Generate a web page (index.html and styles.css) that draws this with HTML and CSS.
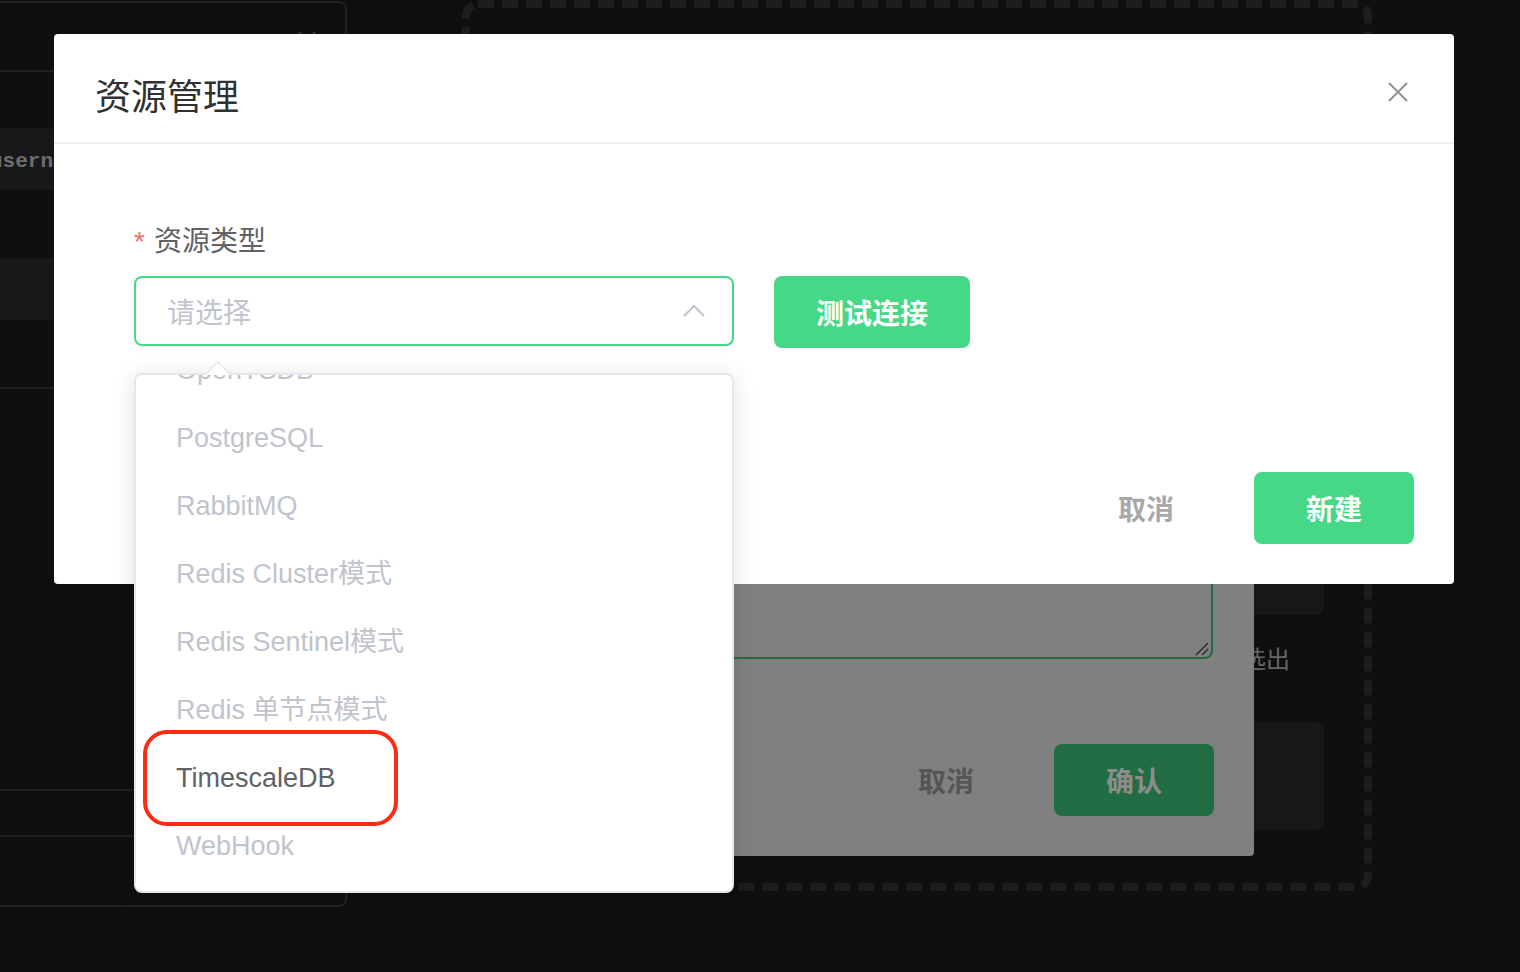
FILE: index.html
```html
<!DOCTYPE html>
<html lang="zh-CN">
  <head>
    <meta charset="UTF-8" />
    <meta name="viewport" content="width=device-width, initial-scale=1.0" />
    <title>资源管理</title>
    <link rel="stylesheet" href="styles.css">
  </head>
  <body>
    <!-- page behind the dialogs -->
    <div class="page">
      <aside class="fields">
        <div class="fields-head">
          <svg class="head-close" width="20" height="20" viewBox="0 0 20 20">
            <path d="M2 2 L18 18 M18 2 L2 18" stroke="#3a3a3d" stroke-width="2" fill="none" />
          </svg>
        </div>
        <div class="field-row active"><span class="field-name">username</span></div>
        <div class="field-row active second"></div>
        <div class="field-line first"></div>
        <div class="field-line second"></div>
        <div class="field-line third"></div>
      </aside>

      <section class="canvas">
        <svg class="dash-frame" width="910" height="891" viewBox="0 0 910 891">
          <rect x="4" y="4" width="902" height="883" rx="12" ry="12"
            fill="none" stroke="#1d1d20" stroke-width="8" stroke-dasharray="16 8" />
        </svg>
        <div class="side-col">
          <div class="side-card tall"></div>
          <div class="side-label">选出</div>
          <div class="side-card low"></div>
        </div>
      </section>
    </div>

    <div class="dialog dialog-back">
      <div class="back-body">
        <div class="back-textarea">
          <svg class="resize" width="16" height="16" viewBox="0 0 16 16">
            <path d="M15 3 L3 15 M15 9 L9 15" stroke="#2e2e2e" stroke-width="1.5" fill="none" />
          </svg>
        </div>
      </div>
      <div class="dialog-footer">
        <button class="btn-text dim">取消</button>
        <button class="btn-primary dim">确认</button>
      </div>
    </div>

    <!-- resource dialog -->
    <div class="dialog dialog-main">
      <div class="dialog-header">
        <h2 class="dialog-title">资源管理</h2>
        <svg class="dialog-close" width="20" height="20" viewBox="0 0 20 20">
          <path d="M1 1 L19 19 M19 1 L1 19" stroke="#909399" stroke-width="2" fill="none" />
        </svg>
      </div>

      <div class="dialog-body">
        <div class="form-label"><span class="required">*</span>资源类型</div>
        <div class="form-row">
          <div class="select is-focus">
            <span class="placeholder">请选择</span>
            <svg class="select-arrow" width="22" height="13" viewBox="0 0 22 13">
              <path d="M1 12 L11 2 L21 12" stroke="#c0c4cc" stroke-width="2" fill="none" />
            </svg>
          </div>
          <button class="btn-primary">测试连接</button>
        </div>

        <div class="dropdown">
          <div class="dropdown-wrap">
            <ul class="options">
              <li>OpenTSDB</li>
              <li>PostgreSQL</li>
              <li>RabbitMQ</li>
              <li>Redis Cluster模式</li>
              <li>Redis Sentinel模式</li>
              <li>Redis 单节点模式</li>
              <li class="hover">TimescaleDB<span class="mark"></span></li>
              <li>WebHook</li>
            </ul>
          </div>
        </div>
      </div>

      <div class="dialog-footer">
        <button class="btn-text">取消</button>
        <button class="btn-primary">新建</button>
      </div>
    </div>
  </body>
</html>
```

FILE: styles.css
```css
* {
  box-sizing: border-box;
}

body {
  margin: 0;
  width: 1520px;
  height: 972px;
  overflow: hidden;
  position: relative;
  background-color: #0f0f0f;
  font-family: "Liberation Sans", "Noto Sans CJK SC", sans-serif;
}

button {
  font-family: "Liberation Sans", "Noto Sans CJK SC", sans-serif;
  border: none;
  cursor: pointer;
}

/* background page */
.page {
  display: flex;
  align-items: flex-start;
}

.fields {
  margin-left: -40px;
  margin-top: 1px;
  width: 387px;
  height: 906px;
  border: 2px solid #222225;
  border-radius: 8px;
  display: flex;
  flex-direction: column;
}

.fields-head {
  height: 69px;
  border-bottom: 2px solid #1f1f22;
  display: flex;
  justify-content: flex-end;
  padding: 27px 28px 0 0;
}

.field-row {
  height: 62px;
  margin-top: 56px;
  display: flex;
  align-items: center;
  padding-top: 4px;
}

.field-row.active {
  background-color: #18181b;
}

.field-row.second {
  margin-top: 68px;
}

.field-name {
  margin-left: 28px;
  font-family: "Liberation Mono", monospace;
  font-size: 21px;
  color: #6e6e6e;
  font-weight: bold;
}

.field-line {
  height: 2px;
  background-color: #1f1f22;
}

.field-line.first {
  margin-top: 67px;
}

.field-line.second {
  margin-top: 400px;
}

.field-line.third {
  margin-top: 44px;
}

.canvas {
  position: relative;
  margin-left: 115px;
  width: 910px;
  height: 891px;
  display: flex;
  flex-direction: column;
  align-items: flex-end;
  padding-right: 48px;
}

.dash-frame {
  position: absolute;
  left: 0;
  top: 0;
}

.side-col {
  display: flex;
  flex-direction: column;
  align-items: flex-end;
}

.side-card {
  width: 300px;
  background-color: #17171a;
  border-radius: 8px;
}

.side-card.tall {
  margin-top: 415px;
  height: 200px;
}

.side-card.low {
  margin-top: 50px;
  height: 108px;
}

.side-label {
  margin-top: 33px;
  margin-right: 34px;
  font-size: 24px;
  line-height: 24px;
  color: #666666;
}

/* dialogs */
.dialog {
  position: absolute;
  border-radius: 4px;
  display: flex;
  flex-direction: column;
}

.dialog-back {
  left: 254px;
  top: 400px;
  width: 1000px;
  height: 456px;
  background-color: #808080;
}

.back-body {
  padding: 40px 41px 0;
}

.back-textarea {
  position: relative;
  height: 219px;
  border: 2px solid #226c43;
  border-radius: 8px;
}

.resize {
  position: absolute;
  right: 2px;
  bottom: 1px;
}

.dialog-main {
  left: 54px;
  top: 34px;
  width: 1400px;
  height: 550px;
  background-color: #ffffff;
}

.dialog-header {
  height: 110px;
  border-bottom: 2px solid #efeff1;
  display: flex;
  justify-content: space-between;
  align-items: flex-start;
  padding: 40px 46px 0 41px;
}

.dialog-title {
  margin: 0;
  font-size: 36px;
  line-height: 48px;
  font-weight: normal;
  color: #303133;
}

.dialog-close {
  margin-top: 8px;
}

.dialog-body {
  position: relative;
  padding: 0 80px;
}

.form-label {
  margin-top: 78px;
  font-size: 28px;
  line-height: 40px;
  color: #606266;
}

.required {
  color: #f56c6c;
  margin-right: 9px;
}

.form-row {
  margin-top: 14px;
  display: flex;
  align-items: flex-start;
  gap: 40px;
}

.select {
  width: 600px;
  height: 70px;
  border: 2px solid #45d886;
  border-radius: 8px;
  display: flex;
  align-items: center;
  justify-content: space-between;
  padding: 0 27px 0 31px;
}

.placeholder {
  font-size: 28px;
  color: #c0c4cc;
}

.select-arrow {
  margin-top: -2px;
}

.btn-primary {
  width: 196px;
  height: 72px;
  border-radius: 8px;
  background-color: #45d886;
  color: #ffffff;
  font-size: 28px;
  font-weight: bold;
}

.dialog-footer .btn-primary {
  width: 160px;
}

.btn-text {
  background: none;
  padding: 0 40px;
  height: 72px;
  margin-right: 40px;
  font-size: 28px;
  font-weight: bold;
  color: #a8a8a8;
}

.btn-primary.dim {
  background-color: #226c43;
  color: #8c8c8c;
}

.btn-text.dim {
  color: #555555;
}

.dialog-footer {
  margin-top: auto;
  display: flex;
  justify-content: flex-end;
  padding: 0 40px 40px;
}

/* select dropdown */
.dropdown {
  position: absolute;
  left: 80px;
  top: 229px;
  width: 600px;
  height: 520px;
  background-color: #ffffff;
  border: 2px solid #e4e7ed;
  border-radius: 8px;
  box-shadow: 0 4px 24px rgba(0, 0, 0, 0.12);
  z-index: 2;
}

.dropdown::before,
.dropdown::after {
  content: "";
  position: absolute;
  left: 70px;
  width: 0;
  height: 0;
  border-style: solid;
  border-width: 0 12px 12px;
  border-color: transparent;
}

.dropdown::before {
  top: -14px;
  border-bottom-color: #e4e7ed;
}

.dropdown::after {
  top: -12px;
  border-bottom-color: #ffffff;
}

.dropdown-wrap {
  height: 100%;
  overflow: hidden;
  border-radius: 6px;
}

.options {
  list-style: none;
  margin: -39px 0 0;
  padding: 0;
}

.options li {
  position: relative;
  height: 68px;
  line-height: 68px;
  padding: 0 40px;
  font-size: 27px;
  color: #c0c4cc;
  white-space: nowrap;
}

.options li.hover {
  color: #606266;
}

/* red annotation around the picked option */
.mark {
  position: absolute;
  left: 7px;
  top: -14px;
  width: 255px;
  height: 96px;
  border: 4px solid #ff2a12;
  border-radius: 24px;
}
```
